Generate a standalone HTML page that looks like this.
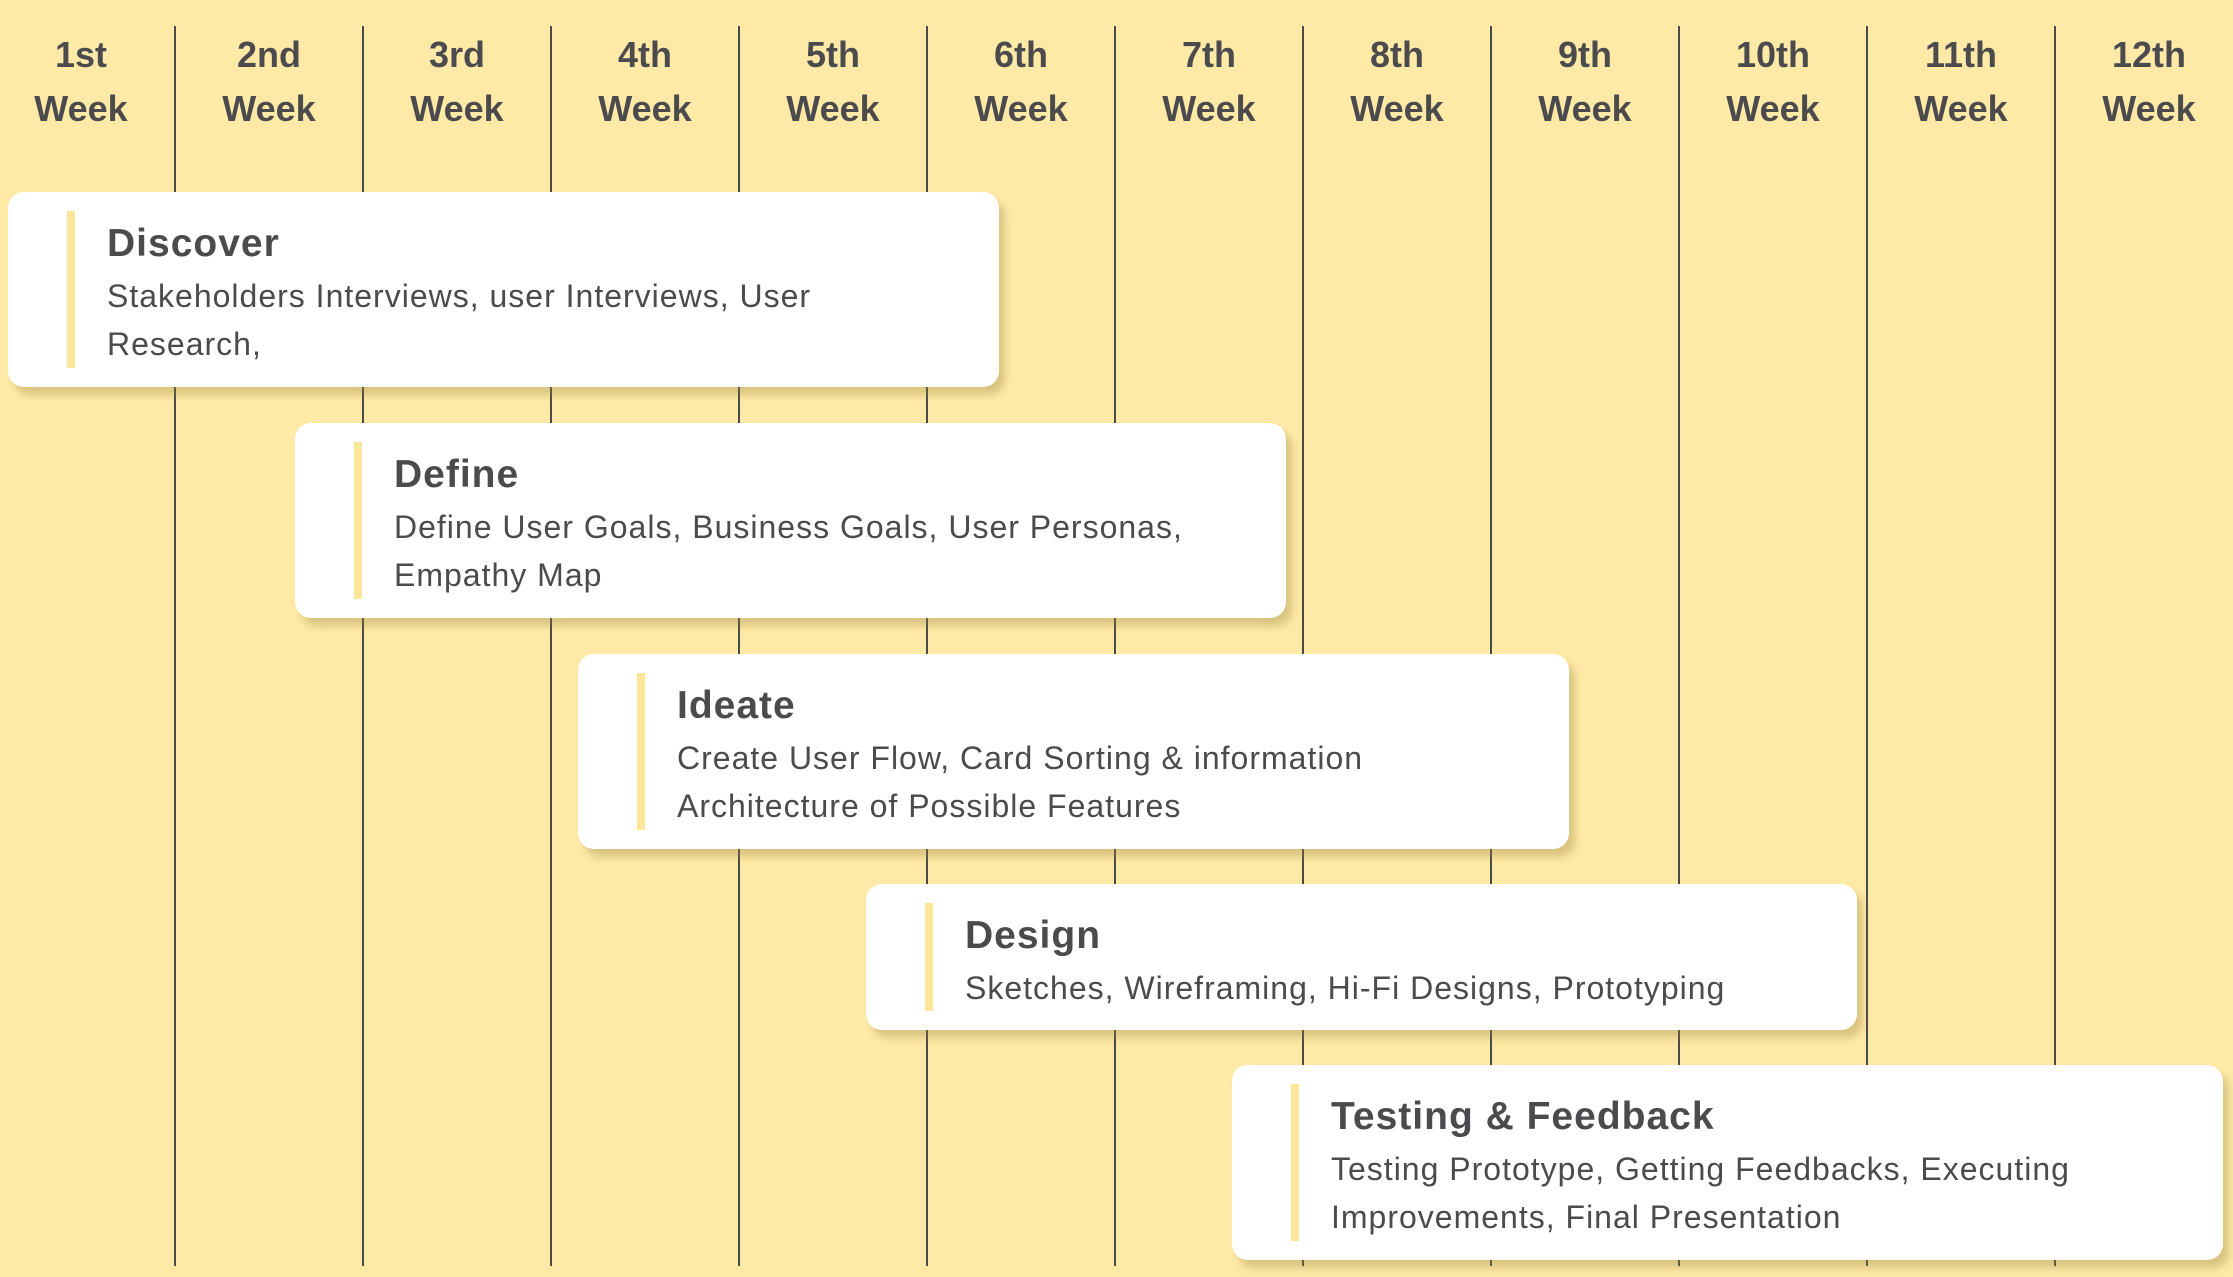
<!DOCTYPE html>
<html><head><meta charset="utf-8"><style>
*{margin:0;padding:0;box-sizing:border-box}
html,body{width:2233px;height:1277px;overflow:hidden;background:#fee9a6;font-family:"Liberation Sans",sans-serif;color:#4b4b4d}
.line{position:absolute;top:26px;width:2px;height:1240px;background:#4a4a4a}
.hd{position:absolute;top:28px;width:188px;text-align:center;font-size:36px;font-weight:bold;line-height:54px;color:#4b4b4d}
.card{position:absolute;width:991px;background:#fff;border-radius:16px;box-shadow:6px 8px 8px rgba(150,130,60,.35)}
.bar{position:absolute;left:59px;top:19px;bottom:19px;width:8px;background:#fde59a}
.t{position:absolute;left:99px;top:30px;font-size:39px;font-weight:bold;white-space:nowrap;letter-spacing:1px}
.b{position:absolute;left:99px;top:80px;font-size:32px;line-height:48px;white-space:nowrap;letter-spacing:1px}
</style></head><body>
<div class="line" style="left:174px"></div>
<div class="line" style="left:362px"></div>
<div class="line" style="left:550px"></div>
<div class="line" style="left:738px"></div>
<div class="line" style="left:926px"></div>
<div class="line" style="left:1114px"></div>
<div class="line" style="left:1302px"></div>
<div class="line" style="left:1490px"></div>
<div class="line" style="left:1678px"></div>
<div class="line" style="left:1866px"></div>
<div class="line" style="left:2054px"></div>
<div class="hd" style="left:-13px">1st<br>Week</div>
<div class="hd" style="left:175px">2nd<br>Week</div>
<div class="hd" style="left:363px">3rd<br>Week</div>
<div class="hd" style="left:551px">4th<br>Week</div>
<div class="hd" style="left:739px">5th<br>Week</div>
<div class="hd" style="left:927px">6th<br>Week</div>
<div class="hd" style="left:1115px">7th<br>Week</div>
<div class="hd" style="left:1303px">8th<br>Week</div>
<div class="hd" style="left:1491px">9th<br>Week</div>
<div class="hd" style="left:1679px">10th<br>Week</div>
<div class="hd" style="left:1867px">11th<br>Week</div>
<div class="hd" style="left:2055px">12th<br>Week</div>

<div class="card" style="left:8px;top:192px;height:195px"><div class="bar"></div><div class="t">Discover</div><div class="b">Stakeholders Interviews, user Interviews, User<br>Research,</div></div>
<div class="card" style="left:295px;top:423px;height:195px"><div class="bar"></div><div class="t">Define</div><div class="b">Define User Goals, Business Goals, User Personas,<br>Empathy Map</div></div>
<div class="card" style="left:578px;top:654px;height:195px"><div class="bar"></div><div class="t">Ideate</div><div class="b">Create User Flow, Card Sorting &amp; information<br>Architecture of Possible Features</div></div>
<div class="card" style="left:866px;top:884px;height:146px"><div class="bar"></div><div class="t">Design</div><div class="b">Sketches, Wireframing, Hi-Fi Designs, Prototyping</div></div>
<div class="card" style="left:1232px;top:1065px;height:195px"><div class="bar"></div><div class="t">Testing &amp; Feedback</div><div class="b">Testing Prototype, Getting Feedbacks, Executing<br>Improvements, Final Presentation</div></div>
</body></html>
